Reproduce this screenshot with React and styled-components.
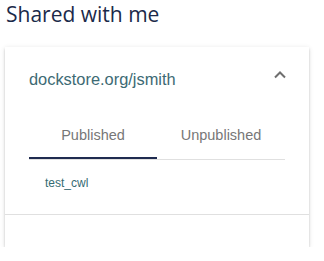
import React, { useState } from "react";
import styled, { createGlobalStyle } from "styled-components";

const Global = createGlobalStyle`
  html, body { margin: 0; padding: 0; background: #fff; }
  body { font-family: "Liberation Sans", Arial, sans-serif; }
`;

const Page = styled.div`
  padding: 0 15px 0 5px;
`;

const Title = styled.h3`
  margin: 0 0 18px 1px;
  font-family: "Open Sans", sans-serif;
  font-weight: 400;
  font-size: 21px;
  line-height: 29px;
  color: #1b2a4a;
`;

const Panel = styled.section`
  width: 304px;
  background: #fff;
  box-shadow: 0 3px 1px -2px rgba(0,0,0,.25), 0 2px 2px 0 rgba(0,0,0,.16), 0 1px 5px 0 rgba(0,0,0,.12);
`;

const Header = styled.div`
  height: 64px;
  padding: 0 24px;
  display: flex;
  align-items: center;
  justify-content: space-between;
`;

const Org = styled.span`
  font-size: 16.4px;
  color: #3d6a74;
`;

const Chevron = styled.svg`
  width: 12px;
  height: 8px;
  margin-top: -8px;
  margin-right: -1px;
`;

const Body = styled.div`
  padding: 0 24px 0;
`;

const TabBar = styled.div`
  display: grid;
  grid-template-columns: 1fr 1fr;
  border-bottom: 1px solid #e0e0e0;
`;

const Tab = styled.button`
  height: 48px;
  border: none;
  background: none;
  padding: 0;
  font-family: "Liberation Sans", Arial, sans-serif;
  font-size: 14.5px;
  color: #777777;
  cursor: pointer;
  box-shadow: ${(p) => (p.$active ? "inset 0 -2px 0 #1f2b50" : "none")};
`;

const List = styled.ul`
  list-style: none;
  margin: 0;
  padding: 16px 0 23px 16px;
`;

const Item = styled.li`
  font-size: 12px;
  line-height: 15px;
  color: #366b73;
`;

const ActionRow = styled.div`
  border-top: 1px solid #e0e0e0;
  height: 32px;
`;

export default function App() {
  const [tab, setTab] = useState(0);
  return (
    <>
      <Global />
      <Page>
        <Title>Shared with me</Title>
        <Panel>
          <Header>
            <Org>dockstore.org/jsmith</Org>
            <Chevron viewBox="0 0 12 8">
              <polyline points="1,6.5 6,1.5 11,6.5" fill="none" stroke="#6f6f6f" strokeWidth="2" />
            </Chevron>
          </Header>
          <Body>
            <TabBar>
              <Tab $active={tab === 0} onClick={() => setTab(0)}>Published</Tab>
              <Tab $active={tab === 1} onClick={() => setTab(1)}>Unpublished</Tab>
            </TabBar>
            <List>
              {tab === 0 && <Item>test_cwl</Item>}
            </List>
          </Body>
          <ActionRow />
        </Panel>
      </Page>
    </>
  );
}
